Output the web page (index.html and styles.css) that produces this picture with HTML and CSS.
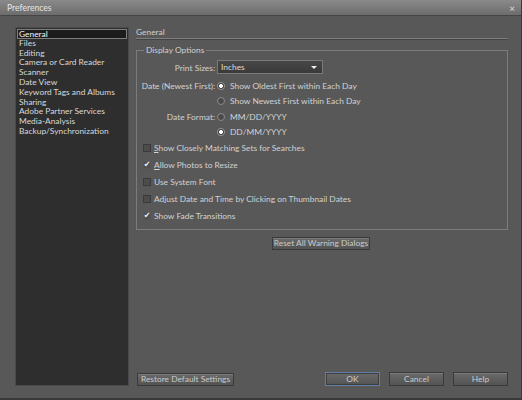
FILE: index.html
```html
<!DOCTYPE html>
<html>
<head>
<meta charset="utf-8">
<link rel="stylesheet" href="styles.css">
</head>
<body>
<div class="dialog">
  <div class="titlebar">
    <span class="title">Preferences</span>
    <span class="close">×</span>
  </div>
  <div class="main">
    <ul class="list">
      <li class="selected">General</li>
      <li>Files</li>
      <li>Editing</li>
      <li>Camera or Card Reader</li>
      <li>Scanner</li>
      <li>Date View</li>
      <li>Keyword Tags and Albums</li>
      <li>Sharing</li>
      <li>Adobe Partner Services</li>
      <li>Media-Analysis</li>
      <li>Backup/Synchronization</li>
    </ul>
    <div class="panel">
      <div class="heading">General</div>
      <fieldset class="group">
        <legend>Display Options</legend>
        <div class="grid">
          <div class="label">Print Sizes:</div>
          <div class="select"><span>Inches</span><span class="arrow"></span></div>
          <div class="label r1">Date (Newest First):</div>
          <div class="radio-row r1"><span class="radio on"></span>Show Oldest First within Each Day</div>
          <div></div>
          <div class="radio-row"><span class="radio"></span>Show Newest First within Each Day</div>
          <div class="label r3">Date Format:</div>
          <div class="radio-row r3"><span class="radio"></span>MM/DD/YYYY</div>
          <div></div>
          <div class="radio-row"><span class="radio on"></span>DD/MM/YYYY</div>
        </div>
        <div class="checks">
          <div class="check"><span class="box"></span><span><u>S</u>how Closely Matching Sets for Searches</span></div>
          <div class="check"><span class="box on">✔</span><span><u>A</u>llow Photos to Resize</span></div>
          <div class="check"><span class="box"></span><span>Use System Font</span></div>
          <div class="check"><span class="box"></span><span>Adjust Date and Time by Clicking on Thumbnail Dates</span></div>
          <div class="check"><span class="box on">✔</span><span>Show Fade Transitions</span></div>
        </div>
      </fieldset>
      <div class="reset-row"><button class="btn reset">Reset All Warning Dialogs</button></div>
      <div class="footer">
        <button class="btn restore">Restore Default Settings</button>
        <div class="actions">
          <button class="btn ok">OK</button>
          <button class="btn">Cancel</button>
          <button class="btn">Help</button>
        </div>
      </div>
    </div>
  </div>
</div>
</body>
</html>
```

FILE: styles.css
```css
* { box-sizing: border-box; }
html, body { margin: 0; padding: 0; }
body {
  width: 522px;
  height: 400px;
  background: #3a3a3a;
  font-family: Lato, "Open Sans", sans-serif;
  font-size: 8.4px;
  color: #d2d2d2;
  overflow: hidden;
}
.dialog {
  width: 521px;
  height: 398px;
  background: #585858;
  display: flex;
  flex-direction: column;
}
.titlebar {
  height: 16px;
  background: linear-gradient(#8a8a8a, #6c6c6c);
  border-bottom: 1px solid #454545;
  display: flex;
  align-items: center;
  justify-content: space-between;
  padding: 0 6px 0 7px;
  color: #e6e6e6;
  font-size: 8.6px;
}
.close { font-size: 10px; color: #ddd; }
.main {
  flex: 1;
  display: flex;
  padding: 11px 13px 12px 15px;
}
.list {
  list-style: none;
  margin: 0;
  padding: 1px;
  width: 114px;
  background: #2e2e2e;
  border: 1px solid #4a4a4a;
  color: #d8d8d8;
  font-size: 8.4px;
}
.list li {
  height: 9.8px;
  line-height: 9px;
  padding-left: 2px;
  white-space: nowrap;
}
.list li.selected {
  background: #1c1c1c;
  border: 1px solid #7e7e7e;
  color: #f4f4f4;
  line-height: 8px;
  padding-left: 1px;
}
.panel {
  flex: 1;
  margin-left: 7px;
  display: flex;
  flex-direction: column;
}
.heading {
  height: 12px;
  line-height: 10px;
  border-bottom: 1px solid #7e7e7e;
  box-shadow: 0 1px 0 #444;
  color: #d0d0d0;
}
.group {
  margin: 7px 0 0 0;
  padding: 2px 0 9px 4px;
  border: 1px solid #7c7c7c;
  height: 184px;
}
.group legend {
  padding: 0 2px;
  margin-left: 3px;
  color: #d0d0d0;
  line-height: 9px;
}
.grid {
  display: grid;
  grid-template-columns: 74px auto;
  column-gap: 2px;
  row-gap: 4px;
  align-items: center;
  margin-top: 3px;
}
.label { text-align: right; white-space: nowrap; }
.select {
  width: 106px;
  height: 14px;
  background: linear-gradient(#474747, #3a3a3a);
  border: 1px solid #7a7a7a;
  display: flex;
  align-items: center;
  justify-content: space-between;
  padding: 0 5px 0 3px;
  color: #dcdcdc;
  margin-bottom: 2px;
}
.arrow {
  width: 0; height: 0;
  border-left: 3px solid transparent;
  border-right: 3px solid transparent;
  border-top: 3px solid #eee;
}
.radio-row {
  display: flex;
  align-items: center;
  height: 11px;
  gap: 5px;
  white-space: nowrap;
}
.r3 { margin-top: 1px; }
.radio {
  width: 8px; height: 8px;
  border-radius: 50%;
  border: 1px solid #8a8a8a;
  background: #4a4a4a;
  display: inline-block;
}
.radio.on {
  background: radial-gradient(circle, #ffffff 0 1.8px, #333 2.2px);
  border-color: #9a9a9a;
}
.checks {
  margin-top: 5px;
  display: flex;
  flex-direction: column;
  gap: 6px;
}
.check {
  display: flex;
  align-items: center;
  height: 11px;
  gap: 3px;
  white-space: nowrap;
  padding-left: 2px;
}
.box {
  width: 8px; height: 8px;
  border: 1px solid #3a3a3a;
  background: #4c4c4c;
  display: inline-flex;
  align-items: center;
  justify-content: center;
  font-size: 8px;
  color: #f2f2f2;
  line-height: 8px;
  font-family: "DejaVu Sans", sans-serif;
}
.box.on { border-color: #555; background: #505050; }
.check u { text-decoration-thickness: 1px; text-underline-offset: 1px; }
.reset-row {
  display: flex;
  padding-left: 136px;
  margin-top: 7px;
}
.btn {
  font-family: inherit;
  font-size: 8.4px;
  color: #cacaca;
  background: linear-gradient(#6a6a6a, #535353);
  border: 1px solid #3a3a3a;
  box-shadow: inset 0 1px 0 #7a7a7a;
  height: 13px;
  padding: 0;
  line-height: 11px;
  white-space: nowrap;
}
.reset { width: 98px; height: 13px; }
.footer {
  margin-top: auto;
  display: flex;
  justify-content: space-between;
  align-items: center;
  padding-left: 0;
}
.restore { width: 97px; height: 13px; margin-left: 1px; }
.actions { display: flex; gap: 9px; }
.actions .btn { width: 55px; height: 14px; }
.btn.ok { border: 1px solid #5f7fa8; box-shadow: inset 0 0 0 1px #3e3e3e; }
```
